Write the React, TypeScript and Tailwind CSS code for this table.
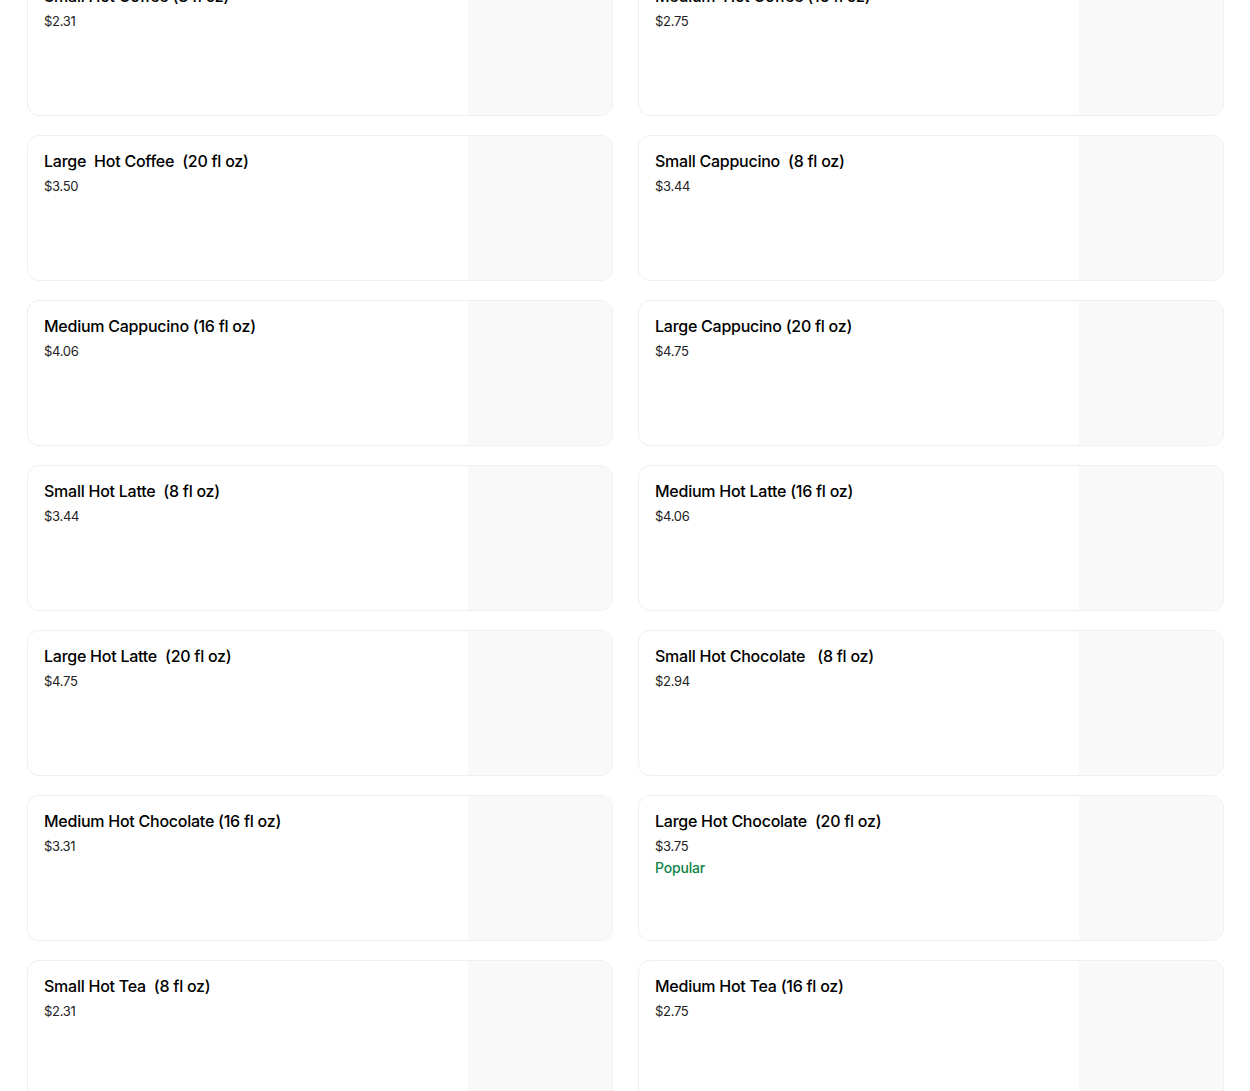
import React from "react";

type Item = { name: string; price: string; popular?: boolean };

const items: Item[] = [
  { name: "Small Hot Coffee (8 fl oz)", price: "$2.31" },
  { name: "Medium  Hot Coffee (16 fl oz)", price: "$2.75" },
  { name: "Large  Hot Coffee  (20 fl oz)", price: "$3.50" },
  { name: "Small Cappucino  (8 fl oz)", price: "$3.44" },
  { name: "Medium Cappucino (16 fl oz)", price: "$4.06" },
  { name: "Large Cappucino (20 fl oz)", price: "$4.75" },
  { name: "Small Hot Latte  (8 fl oz)", price: "$3.44" },
  { name: "Medium Hot Latte (16 fl oz)", price: "$4.06" },
  { name: "Large Hot Latte  (20 fl oz)", price: "$4.75" },
  { name: "Small Hot Chocolate   (8 fl oz)", price: "$2.94" },
  { name: "Medium Hot Chocolate (16 fl oz)", price: "$3.31" },
  { name: "Large Hot Chocolate  (20 fl oz)", price: "$3.75", popular: true },
  { name: "Small Hot Tea  (8 fl oz)", price: "$2.31" },
  { name: "Medium Hot Tea (16 fl oz)", price: "$2.75" },
];

function MenuCard({ item }: { item: Item }) {
  return (
    <div className="flex h-[146px] overflow-hidden rounded-xl border border-[#efefef] bg-white">
      <div className="flex-1 px-4 pt-[15px]">
        <div className="whitespace-pre-wrap text-[16px] leading-[20px] font-medium tracking-[-0.25px] text-black">
          {item.name}
        </div>
        <div className="mt-[6px] text-[13px] leading-[18px] tracking-[-0.3px] text-[#222222]">{item.price}</div>
        {item.popular && (
          <div className="mt-[3px] text-[14px] leading-[20px] font-medium tracking-[-0.2px] text-[#0e8345]">Popular</div>
        )}
      </div>
      {/* image placeholder */}
      <div className="w-[144px] shrink-0 rounded-r-xl bg-[#f9f9f9]" />
    </div>
  );
}

export default function App() {
  return (
    <div className="h-[1091px] overflow-hidden bg-white" style={{ fontFamily: "Inter, 'Liberation Sans', sans-serif" }}>
      <div className="-mt-[30px] grid grid-cols-2 gap-x-[25px] gap-y-[19px] pl-[27px] pr-[26px]">
        {items.map((item, i) => (
          <MenuCard key={i} item={item} />
        ))}
      </div>
    </div>
  );
}
